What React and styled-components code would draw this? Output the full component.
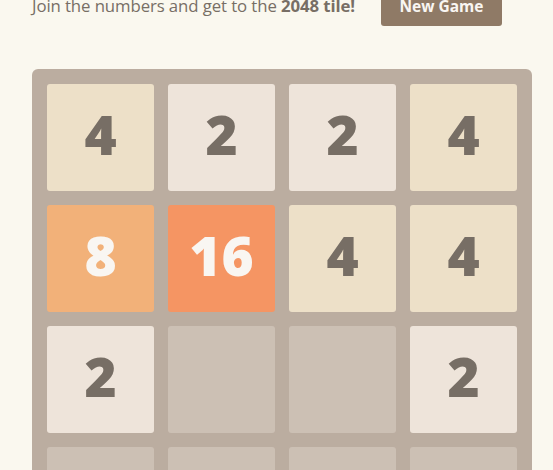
import React from 'react';
import styled, { createGlobalStyle } from 'styled-components';

const GlobalStyle = createGlobalStyle`
  html, body {
    margin: 0;
    padding: 0;
    background: #faf8ef;
    color: #776e65;
    font-family: "Open Sans", "Noto Sans", sans-serif;
    overflow: hidden;
  }
`

const Container = styled.div`
  width: 500px;
  margin-left: 32px;
`

const AboveGame = styled.div`
  display: flex;
  justify-content: space-between;
  align-items: center;
  height: 40px;
  margin-top: -14px;
  padding-right: 30px;
`

const Intro = styled.p`
  margin: 0;
  font-size: 16.8px;
  line-height: 42px;
  letter-spacing: -0.1px;
  b {
    font-weight: 700;
  }
`

const NewGame = styled.button`
  height: 40px;
  width: 121px;
  padding: 0;
  border: none;
  border-radius: 3px;
  background: #8f7a66;
  color: #f9f6f2;
  font-family: inherit;
  font-weight: 700;
  font-size: 15.5px;
  line-height: 38px;
  cursor: pointer;
`

const Board = styled.div`
  margin-top: 43px;
  padding: 15px;
  background: #bbada0;
  border-radius: 6px;
  display: grid;
  grid-template-columns: repeat(4, 107px);
  grid-auto-rows: 107px;
  gap: 14px;
`

const tileColors = {
  0: 'rgba(238, 228, 218, 0.35)',
  2: '#eee4da',
  4: '#ede0c8',
  8: '#f2b179',
  16: '#f59563',
}

const Tile = styled.div`
  border-radius: 3px;
  background: ${p => tileColors[p.$value]};
  color: ${p => (p.$value > 4 ? '#f9f6f2' : '#776e65')};
  display: flex;
  align-items: center;
  justify-content: center;
  font-weight: 800;
  font-size: 55px;
  line-height: 1;
  padding-bottom: 9px;
`

const grid = [
  [4, 2, 2, 4],
  [8, 16, 4, 4],
  [2, 0, 0, 2],
  [0, 0, 0, 0],
]

function App() {
  return (
    <Container>
      <GlobalStyle />
      <AboveGame>
        <Intro>Join the numbers and get to the <b>2048 tile!</b></Intro>
        <NewGame>New Game</NewGame>
      </AboveGame>
      <Board>
        {grid.flat().map((v, i) => (
          <Tile key={i} $value={v}>{v || ''}</Tile>
        ))}
      </Board>
    </Container>
  )
}

export default App
